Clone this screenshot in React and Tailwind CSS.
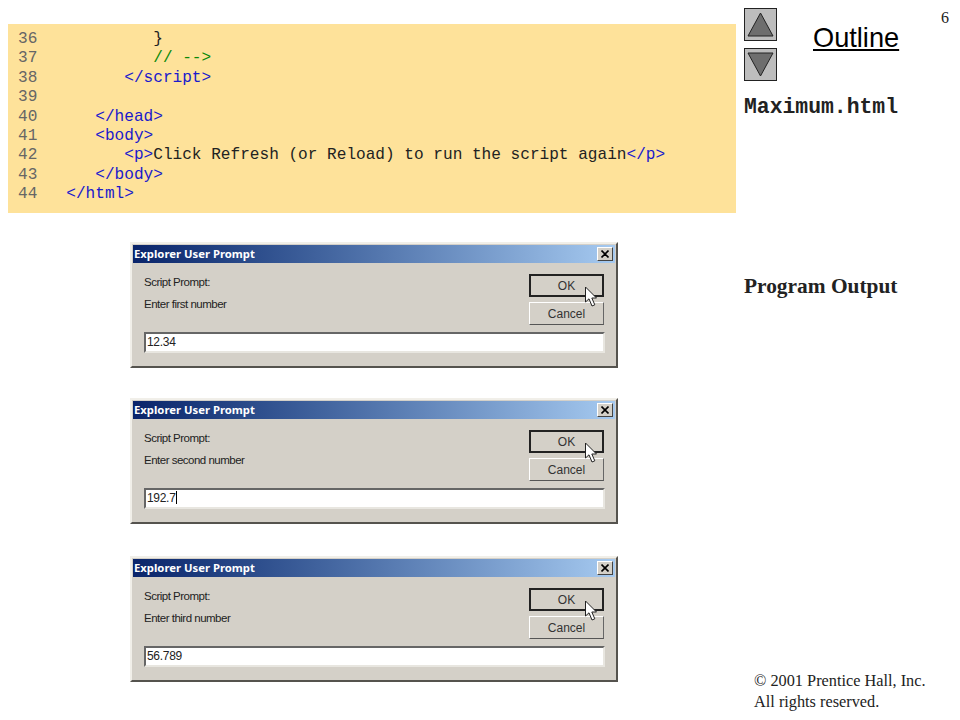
const lines = [
  { n: '36', parts: [['            }', 'text-[#222]']] },
  { n: '37', parts: [['            // -->', 'text-[#0a8a0a]']] },
  { n: '38', parts: [['         </script>', 'text-[#1a1acc]']] },
  { n: '39', parts: [] },
  { n: '40', parts: [['      </head>', 'text-[#1a1acc]']] },
  { n: '41', parts: [['      <body>', 'text-[#1a1acc]']] },
  {
    n: '42',
    parts: [
      ['         <p>', 'text-[#1a1acc]'],
      ['Click Refresh (or Reload) to run the script again', 'text-[#222]'],
      ['</p>', 'text-[#1a1acc]'],
    ],
  },
  { n: '43', parts: [['      </body>', 'text-[#1a1acc]']] },
  { n: '44', parts: [['   </html>', 'text-[#1a1acc]']] },
];

const prompts = [
  { label: 'Enter first number', value: '12.34', gap: 'mt-0' },
  { label: 'Enter second number', value: '192.7', caret: true, gap: 'mt-[30px]' },
  { label: 'Enter third number', value: '56.789', gap: 'mt-[32px]' },
];

function Pointer() {
  return (
    <svg className="absolute left-[53px] top-[10px]" width="15" height="22" viewBox="0 0 15 22">
      <path
        d="M1.5 1 L1.5 16 L5 12.8 L8 20 L10.8 18.8 L7.8 12 L12.5 12 Z"
        fill="#fff"
        stroke="#222"
        strokeWidth="1"
      />
    </svg>
  );
}

function PromptDialog({ label, value, caret, gap }) {
  return (
    <div
      className={`${gap} w-[488px] h-[126px] bg-[#d4d0c8] border-t-2 border-l-2 border-t-[#f1efe9] border-l-[#f1efe9] border-r-2 border-b-2 border-r-[#55534e] border-b-[#55534e] p-[1px] font-['Liberation_Sans',sans-serif]`}
    >
      <div className="h-[18px] flex items-center justify-between pl-[1px] pr-[2px] bg-gradient-to-r from-[#0a246a] to-[#a6caf0]">
        <span className="font-['Noto_Sans',sans-serif] font-bold text-[11.3px] text-white">Explorer User Prompt</span>
        <span className="w-4 h-[14px] flex items-center justify-center bg-[#d4d0c8] border border-t-white border-l-white border-r-[#444] border-b-[#444]">
          <svg width="8" height="8" viewBox="0 0 8 8">
            <path d="M0.5 0.5 L7.5 7.5 M7.5 0.5 L0.5 7.5" stroke="#000" strokeWidth="1.6" />
          </svg>
        </span>
      </div>
      <div className="flex justify-between pl-[11px] pr-[11px] pt-[11px]">
        <div className="text-[11.5px] leading-[14px] text-[#222] tracking-[-0.5px]">
          <div className="pt-[1px]">Script Prompt:</div>
          <div className="mt-[8px]">{label}</div>
        </div>
        <div className="flex flex-col gap-[5px]">
          <div className="relative w-[75px] h-[23px] flex items-center justify-center text-[12px] text-[#333] border-2 border-[#222] bg-[#d4d0c8]">
            OK
            <Pointer />
          </div>
          <div className="w-[75px] h-[23px] flex items-center justify-center text-[12px] text-[#333] border border-t-white border-l-white border-r-[#666] border-b-[#555] bg-[#d4d0c8]">
            Cancel
          </div>
        </div>
      </div>
      <div className="ml-[11px] mt-[7px] w-[461px] h-[21px] bg-white border-2 border-t-[#666] border-l-[#666] border-r-[#e8e6e0] border-b-[#e8e6e0] flex items-center pl-[1px] pb-[2px] text-[12px] text-[#222] tracking-[-0.3px]">
        {value}
        {caret && <span className="w-[1px] h-[13px] bg-black" />}
      </div>
    </div>
  );
}

function ArrowButton({ down }) {
  return (
    <div className="w-[33px] h-[33px] bg-[#bdbdbd] border border-[#222] flex items-center justify-center">
      <svg width="27" height="27" viewBox="0 0 27 27">
        <path
          d={down ? 'M1 2 L26 2 L13.5 25 Z' : 'M13.5 2 L26 25 L1 25 Z'}
          fill="#6e6e6e"
          stroke="#222"
          strokeWidth="1"
        />
      </svg>
    </div>
  );
}

export default function App() {
  return (
    <div className="w-[960px] h-[720px] bg-white flex overflow-hidden">
      <div className="w-[736px] pl-2 pt-6 flex flex-col">
        <div className="h-[189px] bg-[#fee29a] pt-[6px] pl-[10px] font-['Liberation_Mono',monospace] text-[16.1px] leading-[19.4px] whitespace-pre">
          {lines.map((line) => (
            <div key={line.n} className="h-[19.4px]">
              <span className="text-[#666]">{line.n}</span>
              {line.parts.map(([text, color]) => (
                <span key={text} className={color}>
                  {text}
                </span>
              ))}
            </div>
          ))}
        </div>
        <div className="pl-[122px] mt-[29px]">
          {prompts.map((p) => (
            <PromptDialog key={p.value} {...p} />
          ))}
        </div>
      </div>

      <div className="flex-1 flex flex-col pl-2 pt-2 pb-2 pr-[11px]">
        <div className="flex">
          <div className="flex flex-col gap-[7px]">
            <ArrowButton />
            <ArrowButton down />
          </div>
          <div className="ml-[36px] mt-[14px] font-['Liberation_Sans',sans-serif] text-[27.2px] leading-[32px] underline text-black">
            Outline
          </div>
          <div className="ml-auto mt-[1px] font-['Liberation_Serif',serif] text-[16px] leading-[18px] text-[#222]">6</div>
        </div>
        <div className="mt-[14px] font-['Liberation_Mono',monospace] font-bold text-[21.4px] leading-[24px] text-[#222]">
          Maximum.html
        </div>
        <div className="mt-[155px] font-['Liberation_Serif',serif] font-bold text-[21.4px] leading-[24px] text-[#222]">
          Program Output
        </div>
        <div className="mt-auto pl-[10px] font-['Liberation_Serif',serif] text-[16.3px] leading-[21px] text-[#222]">
          <div>© 2001 Prentice Hall, Inc.</div>
          <div>All rights reserved.</div>
        </div>
      </div>
    </div>
  );
}
